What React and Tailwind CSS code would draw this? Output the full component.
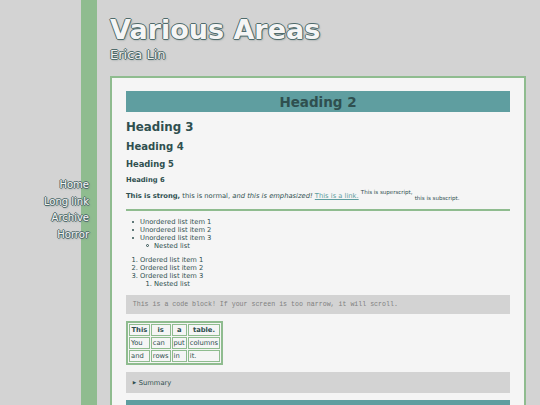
function Bullet({ ring }) {
  return (
    <span className="w-[8px] shrink-0 flex items-center">
      {ring ? (
        <span className="w-[3px] h-[3px] rounded-full border-[0.75px] border-[#2f4f4f]" />
      ) : (
        <span className="w-[2px] h-[2px] rounded-full bg-[#2f4f4f]" />
      )}
    </span>
  );
}

export default function App() {
  const outline =
    "[text-shadow:-1px_0_#4f6b6b,1px_0_#4f6b6b,0_-1px_#4f6b6b,0_1px_#4f6b6b,1px_1px_2px_#7a8a8a]";
  return (
    <div className="h-[405px] overflow-hidden bg-[#d3d3d3] flex font-['DejaVu_Sans',sans-serif] text-[#2f4f4f]">
      <nav
        className={`w-[97px] shrink-0 bg-[linear-gradient(90deg,#d3d3d3_81px,#8fbc8f_81px)] pr-[8px] pt-[177px] text-right text-[10px] leading-[16.5px] text-[#f5f5f5] ${outline}`}
      >
        <div>Home</div>
        <div>Long link</div>
        <div>Archive</div>
        <div>Horror</div>
      </nav>
      <div className="flex-1 min-w-0 pl-[13px] pr-[14px] pt-[14px]">
        <h1 className={`text-[27px] leading-[32px] font-bold text-[#f5f5f5] ${outline}`}>
          Various Areas
        </h1>
        <div className={`mt-[1px] text-[13px] leading-[16px] text-[#f0f0f0] ${outline}`}>
          Erica Lin
        </div>
        <main className="mt-[12.5px] border-2 border-[#8fbc8f] bg-[#f5f5f5] px-[14px] pt-[13.5px] pb-[20px] text-[6.75px] leading-[8px]">
          <h2 className="h-[21px] bg-[#5f9ea0] flex items-center justify-center text-[13.5px] font-bold">
            Heading 2
          </h2>
          <h3 className="mt-[7.5px] text-[11.8px] leading-[14px] font-bold">Heading 3</h3>
          <h4 className="mt-[7px] text-[10.1px] leading-[12px] font-bold">Heading 4</h4>
          <h5 className="mt-[6.5px] text-[8.4px] leading-[10px] font-bold">Heading 5</h5>
          <h6 className="mt-[6.5px] text-[6.75px] leading-[8px] font-bold">Heading 6</h6>
          <p className="mt-[8px] leading-[8px]">
            <strong className="font-bold">This is strong,</strong> this is normal,{" "}
            <em className="italic">and this is emphasized!</em>{" "}
            <a className="text-[#5f9ea0] underline">This is a link.</a>{" "}
            <sup className="text-[5.5px] top-[-3.5px]">This is superscript,</sup>{" "}
            <sub className="text-[5.5px] bottom-[-2.5px]">this is subscript.</sub>
          </p>
          <hr className="mt-[9px] border-0 border-t-2 border-[#8fbc8f]" />
          <ul className="mt-[7px] pl-[6px]">
            <li className="flex"><Bullet />Unordered list item 1</li>
            <li className="flex"><Bullet />Unordered list item 2</li>
            <li className="flex"><Bullet />Unordered list item 3</li>
            <li className="pl-[14px]">
              <ul>
                <li className="flex"><Bullet ring />Nested list</li>
              </ul>
            </li>
          </ul>
          <ol className="mt-[6.75px] list-decimal pl-[14px]">
            <li>Ordered list item 1</li>
            <li>Ordered list item 2</li>
            <li>
              Ordered list item 3
              <ol className="list-decimal pl-[14px]">
                <li>Nested list</li>
              </ol>
            </li>
          </ol>
          <pre className="mt-[7px] bg-[#d3d3d3] px-[6.75px] py-[5.5px] font-['Liberation_Mono',monospace] text-[6.6px] leading-[8px] text-[#808080] overflow-hidden">
            This is a code block! If your screen is too narrow, it will scroll.
          </pre>
          <table className="mt-[7px] border-separate border-spacing-[1.5px] border-2 border-[#8fbc8f]">
            <thead>
              <tr>
                {["This", "is", "a", "table."].map((t) => (
                  <th key={t} className="border border-[#8fbc8f] px-[1.5px] py-[1px] font-bold text-center leading-[8px]">
                    {t}
                  </th>
                ))}
              </tr>
            </thead>
            <tbody>
              <tr>
                {["You", "can", "put", "columns"].map((t) => (
                  <td key={t} className="border border-[#8fbc8f] px-[1px] py-[1px] text-left leading-[8px]">
                    {t}
                  </td>
                ))}
              </tr>
              <tr>
                {["and", "rows", "in", "it."].map((t) => (
                  <td key={t} className="border border-[#8fbc8f] px-[1px] py-[1px] text-left leading-[8px]">
                    {t}
                  </td>
                ))}
              </tr>
            </tbody>
          </table>
          <div className="mt-[7px] bg-[#d3d3d3] px-[6.75px] py-[6.5px] flex items-center gap-[2.5px]">
            <span className="text-[4.5px] leading-[8px]">▶</span>
            <span>Summary</span>
          </div>
          <div className="mt-[7px] h-[21px] bg-[#5f9ea0]" />
        </main>
      </div>
    </div>
  );
}
